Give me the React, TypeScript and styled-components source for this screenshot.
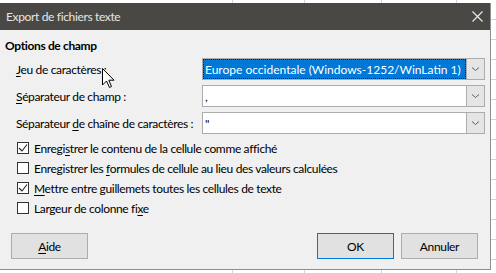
import React from "react";
import styled, { createGlobalStyle, css } from "styled-components";

const Global = createGlobalStyle`
  html, body { margin: 0; padding: 0; }
  body { font-family: Lato, "Noto Sans", sans-serif; font-size: 12px; letter-spacing: -0.35px; color: #000; }
  * { box-sizing: border-box; }
`;

const Desktop = styled.div`
  width: 496px;
  height: 273px;
  overflow: hidden;
  position: relative;
  background-color: #fff;
  background-image:
    linear-gradient(to right, transparent 232px, #d4d4d4 232px, #d4d4d4 233px, transparent 233px,
      transparent 304px, #d4d4d4 304px, #d4d4d4 305px, transparent 305px,
      transparent 381px, #d4d4d4 381px, #d4d4d4 382px, transparent 382px,
      transparent 456px, #d4d4d4 456px, #d4d4d4 457px, transparent 457px),
    repeating-linear-gradient(to bottom, transparent 0, transparent 19px, #d4d4d4 19px, #d4d4d4 20px);
  padding-top: 3px;
`;

const Dialog = styled.div`
  width: 491px;
  height: 267px;
  background: #f0f0f0;
  border-right: 1px solid #8f8f8f;
  border-bottom: 1px solid #8f8f8f;
  display: flex;
  flex-direction: column;
`;

const TitleBar = styled.div`
  height: 27px;
  background: #4a4844;
  color: #e6e6e6;
  display: flex;
  align-items: center;
  justify-content: space-between;
  padding: 0 7px 0 6px;
  font-size: 12px;
`;

const Body = styled.div`
  flex: 1;
  display: flex;
  flex-direction: column;
  padding: 8px 5px 0 5px;
`;

const SectionTitle = styled.div`
  font-weight: 700;
  height: 16px;
  line-height: 16px;
`;

const FieldGrid = styled.div`
  display: grid;
  grid-template-columns: 186px 283px;
  grid-auto-rows: 22px;
  row-gap: 5px;
  margin: 4px 0 0 11px;
  align-items: center;
`;

const Label = styled.div`
  white-space: nowrap;
`;

const Combo = styled.div`
  display: flex;
  height: 22px;
  border: 1px solid #acacac;
  background: #fff;
`;

const ComboText = styled.div<{ $focused?: boolean }>`
  flex: 1;
  display: flex;
  align-items: center;
  padding-left: 2px;
  white-space: nowrap;
  overflow: hidden;
  letter-spacing: 0;
  ${(p) =>
    p.$focused &&
    css`
      background: #0078d7;
      color: #fff;
      outline: 1px dotted #222;
      outline-offset: -1px;
    `}
`;

const ComboButton = styled.div`
  width: 18px;
  display: flex;
  align-items: center;
  justify-content: center;
  background: #e5e5e5;
  border-left: 1px solid #acacac;
`;

const CheckList = styled.div`
  display: flex;
  flex-direction: column;
  margin: 4px 0 0 12px;
`;

const CheckRow = styled.div`
  display: flex;
  align-items: center;
  height: 20px;
  gap: 5px;
  white-space: nowrap;
`;

const Box = styled.div`
  width: 12px;
  height: 12px;
  border: 1px solid #333;
  background: #fff;
  display: flex;
  align-items: center;
  justify-content: center;
`;

const ButtonRow = styled.div`
  display: flex;
  align-items: center;
  margin-top: auto;
  margin-bottom: 10px;
  padding: 0 7px 0 6px;
`;

const Spacer = styled.div`
  flex: 1;
`;

const Button = styled.div<{ $default?: boolean }>`
  width: 77px;
  height: 26px;
  display: flex;
  align-items: center;
  justify-content: center;
  background: #e1e1e1;
  border: 1px solid ${(p) => (p.$default ? "#0078d7" : "#adadad")};
  & + & {
    margin-left: 7px;
  }
`;

const U = styled.span`
  text-decoration: underline;
  text-underline-offset: 2px;
`;

const Cursor = styled.svg`
  position: absolute;
  left: 102px;
  top: 68px;
`;

const Chevron = () => (
  <svg width="9" height="6" viewBox="0 0 9 6">
    <path d="M1 1.5 L4.5 4.5 L8 1.5" fill="none" stroke="#606060" strokeWidth="1" />
  </svg>
);

const Check = () => (
  <svg width="10" height="10" viewBox="0 0 10 10">
    <path d="M1 5 L4 8 L9 1.5" fill="none" stroke="#222" strokeWidth="1.1" />
  </svg>
);

const CloseIcon = () => (
  <svg width="11" height="11" viewBox="0 0 11 11">
    <path d="M0.5 0.5 L10.5 10.5 M10.5 0.5 L0.5 10.5" stroke="#e8e8e8" strokeWidth="1.2" />
  </svg>
);

export default function App() {
  return (
    <>
      <Global />
      <Desktop>
        <Dialog>
          <TitleBar>
            <span>Export de fichiers texte</span>
            <CloseIcon />
          </TitleBar>
          <Body>
            <SectionTitle>Options de champ</SectionTitle>
            <FieldGrid>
              <Label>
                <U>J</U>eu de caractères :
              </Label>
              <Combo>
                <ComboText $focused>Europe occidentale (Windows-1252/WinLatin 1)</ComboText>
                <ComboButton>
                  <Chevron />
                </ComboButton>
              </Combo>
              <Label>
                <U>S</U>éparateur de champ :
              </Label>
              <Combo>
                <ComboText>,</ComboText>
                <ComboButton>
                  <Chevron />
                </ComboButton>
              </Combo>
              <Label>
                Séparateur <U>d</U>e chaîne de caractères :
              </Label>
              <Combo>
                <ComboText>"</ComboText>
                <ComboButton>
                  <Chevron />
                </ComboButton>
              </Combo>
            </FieldGrid>
            <CheckList>
              <CheckRow>
                <Box>
                  <Check />
                </Box>
                <span>
                  Enregi<U>s</U>trer le contenu de la cellule comme affiché
                </span>
              </CheckRow>
              <CheckRow>
                <Box />
                <span>
                  Enregistrer les <U>f</U>ormules de cellule au lieu des valeurs calculées
                </span>
              </CheckRow>
              <CheckRow>
                <Box>
                  <Check />
                </Box>
                <span>
                  <U>M</U>ettre entre guillemets toutes les cellules de texte
                </span>
              </CheckRow>
              <CheckRow>
                <Box />
                <span>
                  Largeur de colonne fi<U>x</U>e
                </span>
              </CheckRow>
            </CheckList>
            <ButtonRow>
              <Button>
                <span>
                  <U>A</U>ide
                </span>
              </Button>
              <Spacer />
              <Button $default>OK</Button>
              <Button>Annuler</Button>
            </ButtonRow>
          </Body>
        </Dialog>
        <Cursor width="13" height="21" viewBox="0 0 13 21">
          <path d="M0.5 0.5 L0.5 17 L4.5 13 L7.5 19.5 L9.5 18.5 L6.8 12.2 L12 12.2 Z" fill="#fff" stroke="#000" strokeWidth="1" />
        </Cursor>
      </Desktop>
    </>
  );
}
